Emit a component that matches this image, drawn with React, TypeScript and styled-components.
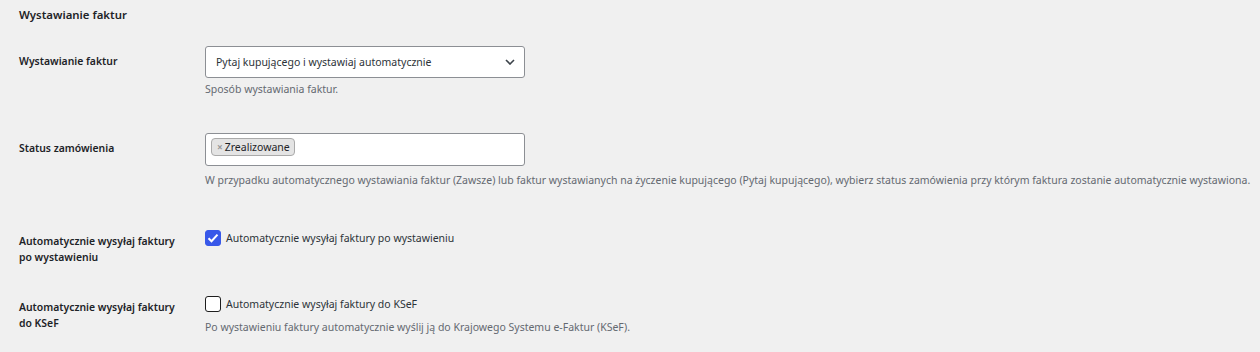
import styled, { createGlobalStyle } from 'styled-components';

const GlobalStyle = createGlobalStyle`
	body {
		margin: 0;
		background: #f0f0f0;
		color: #1d2327;
		font-family: "Noto Sans", "Liberation Sans", sans-serif;
		font-size: 10.5px;
	}
`;

const Page = styled.div`
	padding: 0 0 0 19px;
`;

const Heading = styled.h2`
	margin: 0;
	padding-top: 6px;
	font-size: 11.4px;
	line-height: 18px;
	font-weight: 600;
	color: #1d2327;
`;

const Row = styled.div<{ $space: number }>`
	display: grid;
	grid-template-columns: 186px 1fr;
	align-items: start;
	margin-top: ${({ $space }) => $space}px;
`;

const Label = styled.div`
	padding-top: 7px;
	width: 170px;
	font-size: 10.4px;
	font-weight: 600;
	line-height: 16px;
	color: #1d2327;
`;

const Field = styled.div`
	display: flex;
	flex-direction: column;
	align-items: flex-start;
`;

const SelectBox = styled.div`
	box-sizing: border-box;
	width: 320px;
	height: 32px;
	display: flex;
	align-items: center;
	justify-content: space-between;
	padding: 0 9px 0 10px;
	background: #fff;
	border: 1px solid #8c8f94;
	border-radius: 3px;
	color: #2c3338;
	line-height: 17px;
`;

const MultiBox = styled.div`
	box-sizing: border-box;
	width: 320px;
	height: 33px;
	margin-bottom: 3px;
	display: flex;
	align-items: flex-start;
	padding: 4px 5px;
	background: #fff;
	border: 1px solid #8c8f94;
	border-radius: 3px;
`;

const Tag = styled.span`
	display: inline-flex;
	align-items: center;
	gap: 2px;
	height: 18px;
	box-sizing: border-box;
	padding: 0 4px 0 5px;
	background: #e4e4e4;
	border: 1px solid #aaa;
	border-radius: 4px;
	color: #1d2327;
	line-height: 16px;
`;

const TagRemove = styled.span`
	color: #999;
	font-size: 10px;
	font-weight: 700;
`;

const Description = styled.p`
	margin: 3px 0 0;
	color: #646970;
	line-height: 17px;
	white-space: nowrap;
`;

const CheckLine = styled.label`
	height: 24px;
	display: flex;
	align-items: center;
	gap: 5px;
	color: #2c3338;
`;

const Box = styled.span<{ $checked?: boolean }>`
	box-sizing: border-box;
	width: 16px;
	height: 16px;
	display: inline-flex;
	align-items: center;
	justify-content: center;
	border-radius: 3px;
	border: 1px solid ${({ $checked }) => ($checked ? '#3858e9' : '#1e1e1e')};
	background: ${({ $checked }) => ($checked ? '#3858e9' : '#fff')};
`;

const Chevron = () => (
	<svg width="10" height="6" viewBox="0 0 10 6" fill="none">
		<path d="M1 1l4 4 4-4" stroke="#3c434a" strokeWidth="1.6" />
	</svg>
);

const Check = () => (
	<svg width="12" height="10" viewBox="0 0 12 10" fill="none">
		<path d="M1.5 5.2l3 3 6-6.6" stroke="#fff" strokeWidth="2" />
	</svg>
);

const Checkbox = ({ checked, children }: { checked?: boolean; children: string }) => (
	<CheckLine>
		<Box $checked={checked}>{checked && <Check />}</Box>
		{children}
	</CheckLine>
);

export default function App() {
	return (
		<Page>
			<GlobalStyle />
			<Heading>Wystawianie faktur</Heading>

			<Row $space={22}>
				<Label>Wystawianie faktur</Label>
				<Field>
					<SelectBox>
						<span>Pytaj kupującego i wystawiaj automatycznie</span>
						<Chevron />
					</SelectBox>
					<Description>Sposób wystawiania faktur.</Description>
				</Field>
			</Row>

			<Row $space={35}>
				<Label>Status zamówienia</Label>
				<Field>
					<MultiBox>
						<Tag>
							<TagRemove>×</TagRemove>Zrealizowane
						</Tag>
					</MultiBox>
					<Description>
						W przypadku automatycznego wystawiania faktur (Zawsze) lub faktur wystawianych na życzenie
						kupującego (Pytaj kupującego), wybierz status zamówienia przy którym faktura zostanie
						automatycznie wystawiona.
					</Description>
				</Field>
			</Row>

			<Row $space={37}>
				<Label>Automatycznie wysyłaj faktury po wystawieniu</Label>
				<Field>
					<Checkbox checked>Automatycznie wysyłaj faktury po wystawieniu</Checkbox>
				</Field>
			</Row>

			<Row $space={27}>
				<Label>Automatycznie wysyłaj faktury do KSeF</Label>
				<Field>
					<Checkbox>Automatycznie wysyłaj faktury do KSeF</Checkbox>
					<Description>
						Po wystawieniu faktury automatycznie wyślij ją do Krajowego Systemu e-Faktur (KSeF).
					</Description>
				</Field>
			</Row>
		</Page>
	);
}
